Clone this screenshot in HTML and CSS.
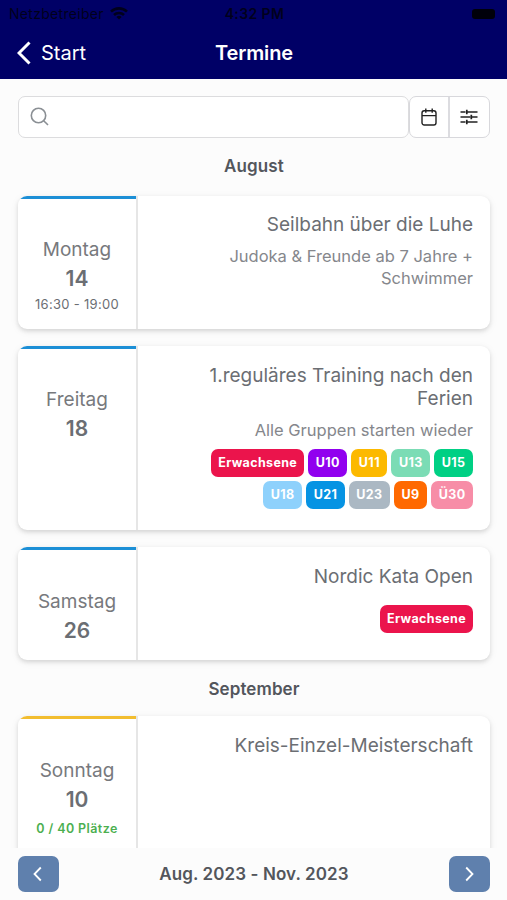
FILE: index.html
```html
<!DOCTYPE html>
<html lang="de">
<head>
  <meta charset="UTF-8" />
  <meta name="viewport" content="width=device-width, initial-scale=1" />
  <title>Termine</title>
  <link rel="stylesheet" href="styles.css">
</head>
<body>
  <header class="header">
    <div class="statusbar">
      <div class="carrier">
        <span>Netzbetreiber</span>
        <svg width="18" height="13" viewBox="0 0 18 13" fill="none" stroke="#00001c" stroke-width="2.6">
          <path d="M1 4.6a11.5 11.5 0 0 1 16 0M4 8a7.2 7.2 0 0 1 10 0" />
          <path d="M9 12.6L6.4 9.9a3.8 3.8 0 0 1 5.2 0z" fill="#00001c" stroke="none" />
        </svg>
      </div>
      <div class="clock">4:32 PM</div>
      <div class="battery"><span></span></div>
    </div>
    <div class="navbar">
      <div class="back">
        <svg width="14" height="24" viewBox="0 0 14 24" fill="none" stroke="#fff" stroke-width="3">
          <path d="M12.5 1.5L2 12l10.5 10.5" />
        </svg>
        <span>Start</span>
      </div>
      <h1>Termine</h1>
    </div>
  </header>

  <main class="content">
    <div class="toolbar">
      <div class="search">
        <svg width="20" height="20" viewBox="0 0 20 20" fill="none" stroke="#8a8f94" stroke-width="1.6">
          <circle cx="8.5" cy="8.5" r="7.2" />
          <path d="M13.7 13.7l4.3 4.3" />
        </svg>
      </div>
      <div class="tool-buttons">
        <button class="tool">
          <svg width="16" height="18" viewBox="0 0 16 18" fill="none" stroke="#222" stroke-width="1.4">
            <rect x="1" y="2.7" width="14" height="14.3" rx="2.2" />
            <path d="M1 7.6h14M4.8 .5v4.2M11.2 .5v4.2" />
          </svg>
        </button>
        <button class="tool">
          <svg width="18" height="16" viewBox="0 0 18 16" fill="none" stroke="#222" stroke-width="1.7">
            <path d="M.5 3h5M7 3h10.5M.5 8h10M12 8h5.5M.5 13h5M7 13h10.5" />
            <path d="M6.8 .7v4.6M11.3 5.7v4.6M6.8 10.7v4.6" />
          </svg>
        </button>
      </div>
    </div>

    <h2 class="month">August</h2>

    <div class="card card-luhe">
      <div class="date blue">
        <div class="weekday">Montag</div>
        <div class="day">14</div>
        <div class="time">16:30 - 19:00</div>
      </div>
      <div class="info">
        <div class="title">Seilbahn über die Luhe</div>
        <div class="subtitle">Judoka &amp; Freunde ab 7 Jahre + Schwimmer</div>
      </div>
    </div>

    <div class="card card-training">
      <div class="date blue">
        <div class="weekday">Freitag</div>
        <div class="day">18</div>
      </div>
      <div class="info">
        <div class="title">1.reguläres Training nach den Ferien</div>
        <div class="subtitle">Alle Gruppen starten wieder</div>
        <div class="tags">
          <span class="tag red">Erwachsene</span>
          <span class="tag purple">U10</span>
          <span class="tag yellow">U11</span>
          <span class="tag mint">U13</span>
          <span class="tag green">U15</span>
          <span class="tag sky">U18</span>
          <span class="tag azure">U21</span>
          <span class="tag grey">U23</span>
          <span class="tag orange">U9</span>
          <span class="tag pink">Ü30</span>
        </div>
      </div>
    </div>

    <div class="card card-kata">
      <div class="date blue">
        <div class="weekday">Samstag</div>
        <div class="day">26</div>
      </div>
      <div class="info">
        <div class="title">Nordic Kata Open</div>
        <div class="tags spaced">
          <span class="tag red">Erwachsene</span>
        </div>
      </div>
    </div>

    <h2 class="month">September</h2>

    <div class="card card-kreis">
      <div class="date amber">
        <div class="weekday">Sonntag</div>
        <div class="day">10</div>
        <div class="places">0 / 40 Plätze</div>
      </div>
      <div class="info">
        <div class="title">Kreis-Einzel-Meisterschaft</div>
      </div>
    </div>
  </main>

  <footer class="footer">
    <button class="pager">
      <svg width="10" height="16" viewBox="0 0 10 16" fill="none" stroke="#fff" stroke-width="1.8">
        <path d="M7.8 1.5L1.5 8l6.3 6.5" />
      </svg>
    </button>
    <div class="range">Aug. 2023 - Nov. 2023</div>
    <button class="pager">
      <svg width="10" height="16" viewBox="0 0 10 16" fill="none" stroke="#fff" stroke-width="1.8">
        <path d="M2.2 1.5L8.5 8l-6.3 6.5" />
      </svg>
    </button>
  </footer>
</body>
</html>
```

FILE: styles.css
```css
* {
  box-sizing: border-box;
}
body {
  margin: 0;
  height: 100vh;
  display: flex;
  flex-direction: column;
  overflow: hidden;
  background: #fcfcfc;
  font-family: Inter, "Liberation Sans", sans-serif;
  color: #6b6e73;
}
button {
  display: flex;
  align-items: center;
  justify-content: center;
  padding: 0;
  border: none;
  background: none;
}

/* Header */
.header {
  flex: none;
  height: 79px;
  background: #000066;
  color: #fff;
}
.statusbar {
  display: grid;
  grid-template-columns: 1fr auto 1fr;
  align-items: center;
  height: 27px;
  padding: 0 7px 0 9px;
  color: #00001c;
  font-size: 14px;
}
.carrier {
  display: flex;
  align-items: center;
  gap: 6px;
  letter-spacing: 0.3px;
}
.clock {
  font-weight: 600;
  letter-spacing: 0.4px;
}
.battery {
  display: flex;
  justify-content: flex-end;
  padding-right: 5px;
}
.battery span {
  width: 23px;
  height: 10px;
  border-radius: 3px;
  background: #00000a;
}
.navbar {
  display: grid;
  grid-template-columns: 1fr auto 1fr;
  align-items: center;
  height: 51px;
  padding: 0 16px 0 17px;
}
.back {
  display: flex;
  align-items: center;
  gap: 10px;
  font-size: 20px;
}
.navbar h1 {
  margin: 0;
  font-size: 20px;
  font-weight: 600;
  letter-spacing: -0.1px;
}

/* Search and filter */
.content {
  flex: 1;
  min-height: 0;
  overflow: hidden;
  padding: 17px 17px 0 18px;
}
.toolbar {
  display: flex;
  height: 42px;
}
.search {
  flex: 1;
  display: flex;
  align-items: center;
  padding-left: 11px;
  border: 1.5px solid #dcdcde;
  border-radius: 7px;
  background: #fff;
}
.tool-buttons {
  display: flex;
  width: 81px;
  border: 1px solid #d8d8dc;
  border-radius: 7px;
  background: #fff;
}
.tool {
  flex: 1;
  padding-right: 1px;
}
.tool + .tool {
  margin-left: -1px;
  border-left: 2px solid #dcdce0;
}

/* Event list */
.month {
  margin: 0;
  padding: 17px 0 19px;
  font-size: 17px;
  line-height: 22px;
  font-weight: 600;
  letter-spacing: 0.1px;
  text-align: center;
  color: #53565c;
}
.card-kata + .month {
  padding: 18px 0 16px;
}
.card {
  display: flex;
  margin-bottom: 17px;
  border-radius: 9px;
  background: #fff;
  box-shadow: 0 2px 4px rgba(0, 0, 0, 0.12), 0 2px 10px rgba(0, 0, 0, 0.06);
  overflow: hidden;
}
.card-luhe {
  height: 133px;
}
.card-training {
  height: 184px;
}
.card-kata {
  height: 113px;
  margin-bottom: 0;
}
.card-kreis {
  height: 150px;
}
.date {
  flex: none;
  width: 118px;
  padding-top: 39px;
  border-top: 3px solid;
  text-align: center;
}
.blue {
  border-color: #1c8fd6;
}
.amber {
  border-color: #f2bd2f;
}
.weekday {
  font-size: 19px;
  line-height: 24px;
  color: #77797d;
}
.day {
  margin-top: 4px;
  font-size: 21px;
  line-height: 26px;
  font-weight: 600;
}
.time,
.places {
  margin-top: 4px;
  font-size: 13px;
  line-height: 16px;
}
.time {
  letter-spacing: 0.3px;
}
.places {
  margin-top: 8px;
  font-size: 12.5px;
  color: #4caf50;
  font-weight: 600;
  letter-spacing: 0.4px;
}
.card-kata .date,
.card-kreis .date {
  padding-top: 40px;
}
.info {
  flex: 1;
  padding: 17px 17px 0 60px;
  border-left: 2px solid #e6e6e6;
  text-align: right;
}
.card-training .info,
.card-kata .info,
.card-kreis .info {
  padding-top: 18px;
}
.title {
  font-size: 19px;
  line-height: 23px;
  font-weight: 400;
}
.subtitle {
  margin-top: 9px;
  font-size: 16.5px;
  line-height: 22px;
  color: #85878c;
}
.tags {
  display: flex;
  flex-wrap: wrap;
  justify-content: flex-end;
  gap: 4px;
  margin-top: 8px;
}
.tags.spaced {
  margin-top: 17px;
}
.tag {
  height: 28px;
  padding: 0 7.5px;
  border-radius: 7px;
  font-size: 12.5px;
  line-height: 27px;
  font-weight: 700;
  letter-spacing: 0.4px;
  color: #fff;
}
.red {
  padding: 0 7px;
  letter-spacing: 0.35px;
  background: #eb144c;
}
.purple { background: #9100ef; }
.yellow { background: #fcb900; }
.mint { background: #7bdcb5; }
.green { background: #00d084; }
.sky { background: #8ed1fc; }
.azure { background: #0693e3; }
.grey { background: #abb8c3; }
.orange { background: #ff6900; }
.pink { background: #f78da7; }

/* Paging between date ranges */
.footer {
  flex: none;
  display: flex;
  align-items: center;
  justify-content: space-between;
  height: 52px;
  padding: 0 17px 1px 18px;
  background: #fcfcfc;
}
.pager {
  width: 41px;
  height: 36px;
  padding-right: 1px;
  border-radius: 7px;
  background: #5f80ad;
}
.range {
  font-size: 17px;
  font-weight: 600;
  letter-spacing: 0.1px;
  color: #53565c;
}
```
